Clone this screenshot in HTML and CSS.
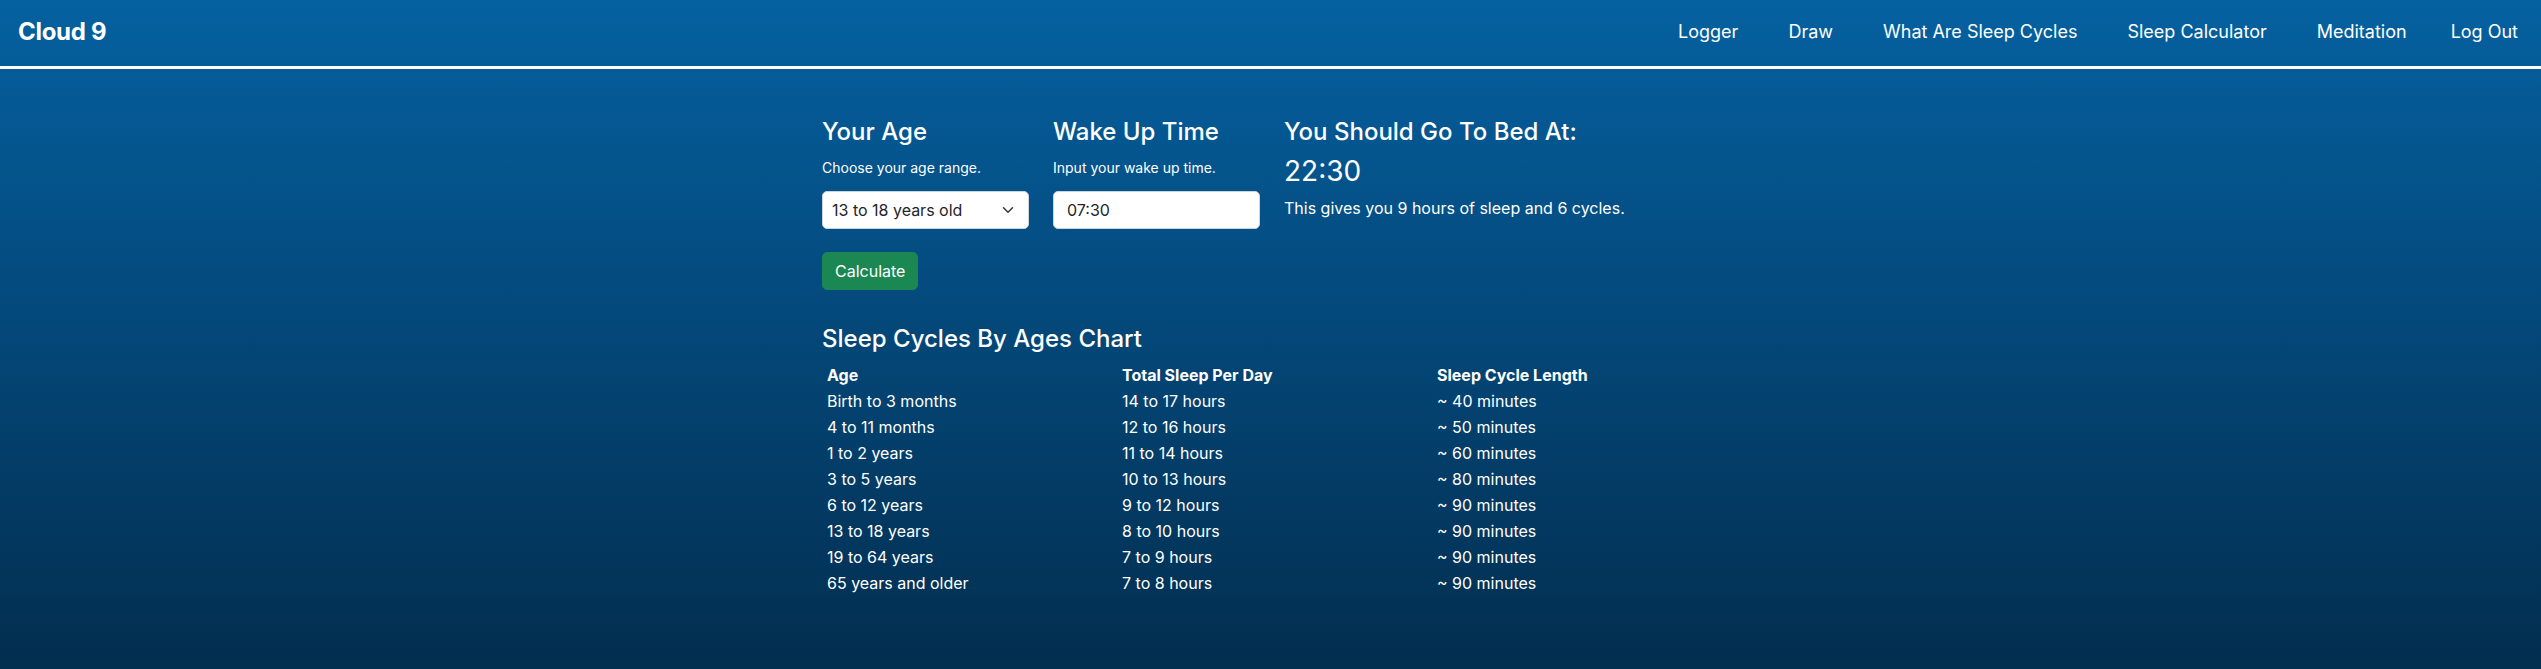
FILE: index.html
```html
<!DOCTYPE html>
<html lang="en">
<head>
<meta charset="utf-8">
<title>Cloud 9 - Sleep Calculator</title>
<link rel="stylesheet" href="styles.css">
</head>
<body>
<header class="topbar">
  <a class="brand" href="#">Cloud 9</a>
  <nav class="nav">
    <a href="#">Logger</a>
    <a href="#">Draw</a>
    <a href="#">What Are Sleep Cycles</a>
    <a href="#">Sleep Calculator</a>
    <a href="#">Meditation</a>
    <a href="#" class="logout">Log Out</a>
  </nav>
</header>
<main class="container">
  <section class="calc">
    <div class="field">
      <h2 class="title">Your Age</h2>
      <p class="hint">Choose your age range.</p>
      <div class="select-wrap">
        <select class="control select">
          <option>13 to 18 years old</option>
        </select>
        <svg class="chev" width="12" height="8" viewBox="0 0 12 8"><path d="M1.5 1.8 L6 6.2 L10.5 1.8" fill="none" stroke="#343a40" stroke-width="1.6" stroke-linecap="round" stroke-linejoin="round"/></svg>
      </div>
    </div>
    <div class="field">
      <h2 class="title">Wake Up Time</h2>
      <p class="hint">Input your wake up time.</p>
      <input class="control input" type="text" value="07:30">
    </div>
    <div class="field result">
      <h2 class="title">You Should Go To Bed At:</h2>
      <div class="time">22:30</div>
      <p class="summary">This gives you 9 hours of sleep and 6 cycles.</p>
    </div>
  </section>
  <button class="btn" type="button">Calculate</button>

  <section class="chart">
    <h2 class="title">Sleep Cycles By Ages Chart</h2>
    <table class="table">
      <colgroup><col class="c1"><col class="c2"><col class="c3"></colgroup>
      <thead>
        <tr><th>Age</th><th>Total Sleep Per Day</th><th>Sleep Cycle Length</th></tr>
      </thead>
      <tbody>
        <tr><td>Birth to 3 months</td><td>14 to 17 hours</td><td>~ 40 minutes</td></tr>
        <tr><td>4 to 11 months</td><td>12 to 16 hours</td><td>~ 50 minutes</td></tr>
        <tr><td>1 to 2 years</td><td>11 to 14 hours</td><td>~ 60 minutes</td></tr>
        <tr><td>3 to 5 years</td><td>10 to 13 hours</td><td>~ 80 minutes</td></tr>
        <tr><td>6 to 12 years</td><td>9 to 12 hours</td><td>~ 90 minutes</td></tr>
        <tr><td>13 to 18 years</td><td>8 to 10 hours</td><td>~ 90 minutes</td></tr>
        <tr><td>19 to 64 years</td><td>7 to 9 hours</td><td>~ 90 minutes</td></tr>
        <tr><td>65 years and older</td><td>7 to 8 hours</td><td>~ 90 minutes</td></tr>
      </tbody>
    </table>
  </section>
</main>
</body>
</html>
```

FILE: styles.css
```css
* { box-sizing: border-box; }
html, body { height: 100%; }
body {
  margin: 0;
  min-height: 100%;
  font-family: Inter, "Noto Sans", sans-serif;
  color: #fff;
  background: linear-gradient(180deg, #0561a0 0%, #044f85 35%, #033a63 75%, #022e4f 100%);
}
.topbar {
  height: 69px;
  display: flex;
  align-items: center;
  justify-content: space-between;
  padding: 0 23px 3px 18px;
  border-bottom: 3px solid #fff;
}
.brand {
  color: #fff;
  text-decoration: none;
  font-weight: 700;
  font-size: 24px;
  letter-spacing: -0.3px;
}
.nav {
  display: flex;
  gap: 50px;
}
.nav a {
  color: #fff;
  text-decoration: none;
  font-size: 18px;
}
.nav .logout { margin-left: -6px; }
.container {
  width: 897px;
  margin: 0 auto;
  padding-top: 49px;
}
.calc {
  display: flex;
  gap: 24px;
}
.field { width: 207px; }
.field.result { width: auto; }
.title {
  margin: 0;
  font-size: 24px;
  font-weight: 500;
  line-height: 1.2;
}
.hint {
  margin: 10px 0 0;
  font-size: 14px;
  line-height: 21px;
}
.select-wrap {
  position: relative;
  margin-top: 13px;
}
.control {
  display: block;
  width: 207px;
  height: 38px;
  border: 1px solid #ced4da;
  border-radius: 5px;
  background: #fff;
  color: #212529;
  font-family: Inter, "Noto Sans", sans-serif;
  font-size: 16px;
  outline: none;
}
.select {
  appearance: none;
  -webkit-appearance: none;
  padding: 0 30px 0 9px;
}
.chev {
  position: absolute;
  right: 15px;
  top: 15px;
  pointer-events: none;
}
.input {
  margin-top: 13px;
  padding: 0 13px;
}
.time {
  margin-top: 8px;
  font-size: 28px;
  line-height: 1.2;
}
.summary {
  margin: 8px 0 0;
  font-size: 16px;
  line-height: 24px;
}
.btn {
  margin-top: 23px;
  height: 38px;
  padding: 0 12px;
  border: 1px solid #198754;
  border-radius: 5px;
  background: #1b8753;
  color: #fff;
  font-family: Inter, "Noto Sans", sans-serif;
  font-size: 16px;
}
.chart { margin-top: 35px; }
.chart .title { margin-bottom: 8px; }
.table {
  width: 100%;
  border-collapse: collapse;
  font-size: 16px;
}
.c1 { width: 295px; }
.c2 { width: 315px; }
.table th, .table td {
  text-align: left;
  padding: 2px 5px;
  line-height: 22px;
}
.table th { font-weight: 700; }
```
